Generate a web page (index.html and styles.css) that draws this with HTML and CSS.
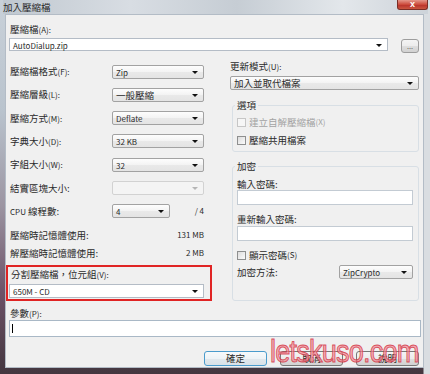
FILE: index.html
```html
<!DOCTYPE html>
<html lang="zh-Hant">
<head>
    <meta charset="UTF-8">
    <title>加入壓縮檔</title>
    <link rel="stylesheet" href="styles.css">
</head>
<body>
    <div class="window">
        <div class="titlebar">
            <span class="title">加入壓縮檔</span>
            <div class="close-btn">x</div>
        </div>

        <div class="client">
            <div class="top-label">壓縮檔<span class="en">(A):</span></div>
            <div class="archive-row">
                <div class="combo edit archive"><span class="en">AutoDialup.zip</span><i class="arrow"></i></div>
                <div class="btn browse">...</div>
            </div>

            <div class="columns">
                <div class="left-col">
                    <div class="row">
                        <span>壓縮檔格式<span class="en">(F):</span></span>
                        <div class="combo"><span class="en">Zip</span><i class="arrow"></i></div>
                    </div>
                    <div class="row">
                        <span>壓縮層級<span class="en">(L):</span></span>
                        <div class="combo">一般壓縮<i class="arrow"></i></div>
                    </div>
                    <div class="row">
                        <span>壓縮方式<span class="en">(M):</span></span>
                        <div class="combo"><span class="en">Deflate</span><i class="arrow"></i></div>
                    </div>
                    <div class="row">
                        <span>字典大小<span class="en">(D):</span></span>
                        <div class="combo"><span class="en">32 KB</span><i class="arrow"></i></div>
                    </div>
                    <div class="row">
                        <span>字組大小<span class="en">(W):</span></span>
                        <div class="combo"><span class="en">32</span><i class="arrow"></i></div>
                    </div>
                    <div class="row">
                        <span>結實區塊大小:</span>
                        <div class="combo disabled"><i class="arrow"></i></div>
                    </div>
                    <div class="row">
                        <span><span class="en">CPU</span> 線程數:</span>
                        <div class="cpu">
                            <div class="combo short"><span class="en">4</span><i class="arrow"></i></div>
                            <span class="en">/ 4</span>
                        </div>
                    </div>

                    <div class="mem-rows">
                        <div class="mem-row"><span>壓縮時記憶體使用:</span><span class="en">131 MB</span></div>
                        <div class="mem-row"><span>解壓縮時記憶體使用:</span><span class="en">2 MB</span></div>
                    </div>

                    <div class="split-box">
                        <div class="split-label">分割壓縮檔，位元組<span class="en">(V):</span></div>
                        <div class="combo edit split"><span class="en">650M - CD</span><i class="arrow"></i></div>
                    </div>
                </div>

                <div class="right-col">
                    <div>更新模式<span class="en">(U):</span></div>
                    <div class="combo update">加入並取代檔案<i class="arrow"></i></div>

                    <fieldset class="group options">
                        <legend>選項</legend>
                        <div class="check disabled"><i class="box"></i>建立自解壓縮檔<span class="en">(X)</span></div>
                        <div class="check"><i class="box"></i>壓縮共用檔案</div>
                    </fieldset>

                    <fieldset class="group crypt">
                        <legend>加密</legend>
                        <div>輸入密碼:</div>
                        <div class="textbox"></div>
                        <div class="gap-label">重新輸入密碼:</div>
                        <div class="textbox"></div>
                        <div class="check show-pass"><i class="box"></i>顯示密碼<span class="en">(S)</span></div>
                        <div class="method-row">
                            <span>加密方法:</span>
                            <div class="combo method"><span class="en">ZipCrypto</span><i class="arrow"></i></div>
                        </div>
                    </fieldset>
                </div>
            </div>

            <div class="params-label">參數<span class="en">(P):</span></div>
            <div class="textbox params"><i class="caret"></i></div>

            <div class="buttons">
                <div class="btn default">確定</div>
                <div class="btn">取消</div>
                <div class="btn">說明</div>
            </div>
        </div>

        <div class="watermark">letskuso.com</div>
    </div>
</body>
</html>
```

FILE: styles.css
```css
* {
    box-sizing: border-box;
}
body {
    margin: 0;
    background: #fff;
    font-family: "Noto Sans CJK TC", sans-serif;
    font-size: 9.5px;
    line-height: 12px;
    color: #2a2a2a;
}
.en {
    font-size: 8px;
}
.window {
    position: relative;
    width: 430px;
    height: 374px;
    padding: 0 6px 6px 5px;
    display: flex;
    flex-direction: column;
    overflow: hidden;
    background:
        linear-gradient(to right, rgba(0,0,0,0) 423px, #d9dde1 424px),
        linear-gradient(to bottom, #c9d1d9 0, #b9c3cd 30%, #9c95a2 55%, #6d5268 78%, #44363f 100%);
}
.titlebar {
    height: 14px;
    display: flex;
    justify-content: space-between;
    align-items: flex-start;
    margin: 0 -4px 0 -2px;
    background: linear-gradient(to right, #c0c8d0, #d8dde3 30%, #c6cdd4 55%, #e3e7eb 80%, #cdd3d9);
}
.title {
    padding-top: 1px;
    color: #2b2b2b;
}
.close-btn {
    width: 31px;
    height: 10px;
    border: 1px solid #7a2e26;
    border-top: none;
    border-radius: 0 0 3px 3px;
    background: linear-gradient(#e4978a, #cc4b3c 50%, #b8302a 51%, #c9553f);
    color: #fff;
    font-family: "Liberation Sans", sans-serif;
    font-weight: bold;
    font-size: 9px;
    line-height: 9px;
    text-align: center;
}
.client {
    flex: 1;
    border: 1px solid #b3bcc6;
    background: #f0f0f0;
    padding: 8px 2px 0 0;
}
.top-label {
    margin-left: 4px;
}
.archive-row {
    display: flex;
    align-items: flex-start;
    margin: 2px 2px 0 3px;
}
.combo {
    position: relative;
    height: 14px;
    border: 1px solid #a2a2a2;
    border-radius: 2px;
    background: linear-gradient(#fdfdfd, #f3f3f3 50%, #e9e9e9 51%, #e4e4e4);
    padding-left: 3px;
    line-height: 12px;
    white-space: nowrap;
}
.combo .arrow {
    position: absolute;
    right: 5px;
    top: 5px;
    border-left: 3px solid transparent;
    border-right: 3px solid transparent;
    border-top: 3px solid #111;
}
.combo.edit {
    background: #fff;
    border-color: #b4bcc6;
    border-radius: 0;
}
.combo.disabled {
    background: #f4f4f4;
    border-color: #d2d2d2;
}
.combo.disabled .arrow {
    border-top-color: #b5b5b5;
}
.archive {
    width: 379px;
    height: 13px;
}
.btn {
    height: 15px;
    border: 1px solid #777;
    border-radius: 3px;
    background: linear-gradient(#f4f4f4, #ececec 50%, #dedede 51%, #d2d2d2);
    text-align: center;
    line-height: 13px;
}
.browse {
    width: 18px;
    height: 14px;
    margin: 1px 0 0 13px;
    border-color: #9d9d9d;
    color: #555;
    font-size: 7px;
}
.columns {
    display: flex;
    margin-top: 7px;
}
.left-col {
    width: 206px;
}
.row {
    height: 23.25px;
    display: flex;
    justify-content: space-between;
    align-items: center;
    padding: 0 8px 0 4px;
}
.row .combo {
    width: 92px;
}
.cpu {
    width: 92px;
    display: flex;
    justify-content: space-between;
    align-items: center;
}
.row .combo.short {
    width: 58px;
}
.mem-rows {
    margin-top: 6px;
    padding: 0 8px 0 4px;
}
.mem-row {
    height: 18px;
    display: flex;
    justify-content: space-between;
}
.split-box {
    height: 36px;
    border: 2px solid #e02424;
    padding: 1px 6px 2px 1px;
}
.split-label {
    margin-left: 2px;
}
.split {
    margin-top: 3px;
}
.right-col {
    width: 190px;
    margin-left: 18px;
}
.update {
    width: 189px;
    margin-top: 3px;
}
.group {
    margin: 9px 0 0 2px;
    width: 187px;
    border: 1px solid #d8dfe5;
    border-radius: 3px;
    padding: 5px 5px 5px 4px;
}
.group legend {
    padding: 0 2px;
    margin-left: -2px;
}
.crypt {
    margin-top: 8px;
    padding: 6px 5px 21px 4px;
}
.check {
    display: flex;
    align-items: center;
    height: 12px;
}
.check + .check {
    margin-top: 6px;
}
.check .box {
    width: 9px;
    height: 9px;
    margin-right: 3px;
    border: 1px solid #8e8f8f;
    background: linear-gradient(135deg, #dcdcdc, #fbfbfb);
}
.check.disabled {
    color: #a3a3a3;
}
.check.disabled .box {
    border-color: #c6c6c6;
    background: #f6f6f6;
}
.textbox {
    height: 15px;
    border: 1px solid #c3cbd3;
    background: #fff;
}
.gap-label {
    margin-top: 8px;
    margin-bottom: 1px;
}
.show-pass {
    margin-top: 8px;
}
.method-row {
    margin-top: 4px;
    height: 14px;
    display: flex;
    justify-content: space-between;
    align-items: center;
}
.method {
    width: 74px;
}
.params-label {
    margin: 6px 0 0 4px;
}
.params {
    height: 17px;
    margin-left: 3px;
    border-color: #a9b8c6;
    padding: 3px 0 0 2px;
}
.caret {
    display: block;
    width: 1px;
    height: 9px;
    background: #000;
}
.buttons {
    display: flex;
    justify-content: flex-end;
    gap: 13px;
    margin-top: 14px;
    padding-right: 2px;
}
.buttons .btn {
    width: 63px;
}
.btn.default {
    border-color: #4a9bcc;
    background: linear-gradient(#f6f9fb, #eef3f6 50%, #e1e8ed 51%, #d9e2e8);
}
.watermark {
    position: absolute;
    left: 270px;
    top: 335px;
    font-family: "Liberation Sans", sans-serif;
    font-size: 32px;
    line-height: 32px;
    letter-spacing: -1px;
    color: rgba(242, 140, 152, 0.7);
    -webkit-text-stroke: 1px rgba(210, 50, 65, 0.8);
    transform: scaleX(0.85);
    transform-origin: left top;
    white-space: nowrap;
}
```
